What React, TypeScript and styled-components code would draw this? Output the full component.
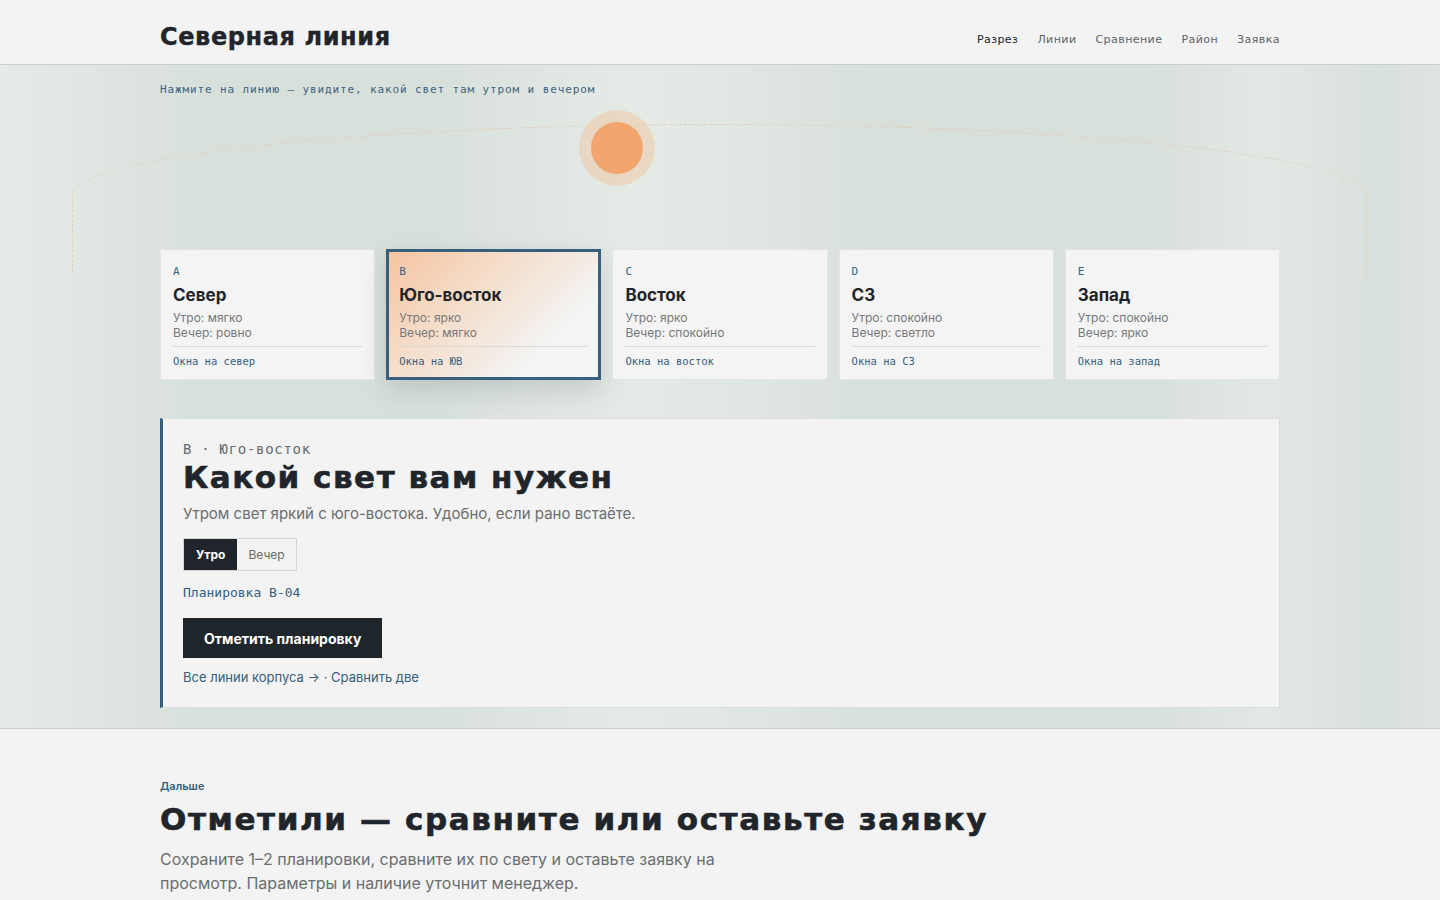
import React, { useState } from 'react';
import styled, { createGlobalStyle } from 'styled-components';

const GlobalStyle = createGlobalStyle`
  * { box-sizing: border-box; }
  body {
    margin: 0;
    background: #f2f3f2;
    font-family: Inter, "Noto Sans", sans-serif;
    color: #1f252a;
  }
`;

const DISPLAY = `"DejaVu Sans", Inter, sans-serif`;
const MONO = `"DejaVu Sans Mono", "Liberation Mono", monospace`;

const Wrap = styled.div`
  width: 1120px;
  margin: 0 auto;
`;

const Header = styled.header`
  height: 65px;
  background: #f2f3f2;
  border-bottom: 1px solid #c8cecb;
`;

const HeaderInner = styled(Wrap)`
  height: 100%;
  display: flex;
  align-items: center;
  justify-content: space-between;
`;

const Logo = styled.div`
  font-family: ${DISPLAY};
  font-weight: 700;
  font-size: 24px;
  letter-spacing: 0.6px;
  -webkit-text-stroke: 0.4px #1f252a;
  color: #1f252a;
  margin-top: 9px;
`;

const Nav = styled.nav`
  display: flex;
  gap: 19px;
  margin-top: 14px;
`;

const NavLink = styled.a<{ $active?: boolean }>`
  font-family: ${DISPLAY};
  font-size: 11px;
  letter-spacing: 0.04em;
  color: ${(p) => (p.$active ? '#1f252a' : '#5d6467')};
  text-decoration: none;
  cursor: pointer;
`;

const Hero = styled.section`
  position: relative;
  background:
    linear-gradient(90deg,
      rgba(232, 236, 233, 0.9) 0%,
      rgba(214, 222, 218, 0) 14%,
      rgba(214, 222, 218, 0) 30%,
      rgba(232, 236, 233, 0.85) 44%,
      rgba(232, 236, 233, 0.5) 52%,
      rgba(214, 222, 218, 0) 60%,
      rgba(214, 222, 218, 0) 80%,
      rgba(230, 234, 231, 0.8) 88%,
      rgba(214, 222, 218, 0) 96%,
      rgba(226, 231, 228, 0.6) 100%),
    #d8e0dc;
  border-bottom: 1px solid #c8cecb;
  padding: 18px 0 20px;
  overflow: hidden;
`;

/* dashed sky path over the building lines */
const Arc = styled.div`
  position: absolute;
  left: 72px;
  right: 73px;
  top: 59px;
  height: 151px;
  border: 1px dashed #e3cdb6;
  border-bottom: none;
  border-radius: 50% 50% 0 0 / 72px 72px 0 0;
  pointer-events: none;
`;

const Hint = styled.p`
  margin: 0;
  font-family: ${MONO};
  font-size: 11px;
  line-height: 14px;
  letter-spacing: 0.08em;
  color: #3d6580;
`;

const Sky = styled.div`
  position: relative;
  height: 152px;
`;

const Sun = styled.div`
  position: absolute;
  top: 13px;
  width: 76px;
  height: 76px;
  border-radius: 50%;
  background: rgba(240, 198, 160, 0.5);
  display: flex;
  align-items: center;
  justify-content: center;

  &::after {
    content: '';
    width: 52px;
    height: 52px;
    border-radius: 50%;
    background: #f0a66d;
  }
`;

const Lines = styled.div`
  position: relative;
  display: grid;
  grid-template-columns: repeat(5, 1fr);
  gap: 11px;
`;

const Card = styled.button<{ $active?: boolean }>`
  text-align: left;
  font: inherit;
  padding: 15px 12px 11px;
  border: 1px solid ${(p) => (p.$active ? '#36607e' : '#e2e5e3')};
  background: ${(p) =>
    p.$active
      ? 'linear-gradient(135deg, #f5c4a0 0%, #f5dcc8 35%, #f3f4f3 75%)'
      : '#f3f4f3'};
  box-shadow: ${(p) =>
    p.$active
      ? 'inset 0 0 0 2px #36607e, 0 10px 24px rgba(60, 80, 75, 0.18)'
      : 'none'};
  cursor: pointer;
  display: flex;
  flex-direction: column;
`;

const CardCode = styled.span`
  font-family: ${MONO};
  font-size: 11px;
  line-height: 14px;
  color: #36607e;
`;

const CardTitle = styled.span`
  margin-top: 5px;
  font-size: 17px;
  line-height: 22px;
  font-weight: 700;
  color: #1f252a;
`;

const CardMeta = styled.span<{ $first?: boolean }>`
  margin-top: ${(p) => (p.$first ? '4px' : '0')};
  font-size: 12px;
  line-height: 15px;
  color: #76797b;
`;

const CardFoot = styled.span`
  margin-top: 6px;
  padding-top: 7px;
  border-top: 1px solid #d8dbd9;
  font-family: ${MONO};
  font-size: 10.5px;
  line-height: 14px;
  color: #36607e;
`;

const Panel = styled.div`
  margin-top: 38px;
  background: #f2f3f2;
  border: 1px solid #d9dddb;
  border-left: 3px solid #36607e;
  padding: 21px 20px 21px;
`;

const Eyebrow = styled.div`
  font-family: ${MONO};
  font-size: 14px;
  line-height: 18px;
  letter-spacing: 0.05em;
  color: #666a6c;
`;

const PanelTitle = styled.h2`
  margin: 1px 0 0;
  font-family: ${DISPLAY};
  font-weight: 700;
  font-size: 31px;
  line-height: 36px;
  letter-spacing: 1.5px;
  -webkit-text-stroke: 0.6px #1f252a;
  color: #1f252a;
`;

const Lead = styled.p`
  margin: 8px 0 0;
  font-size: 15px;
  line-height: 22px;
  color: #6a6e70;
`;

const Toggle = styled.div`
  margin-top: 13px;
  display: flex;
  width: fit-content;
  border: 1px solid #d3d7d5;
`;

const ToggleBtn = styled.button<{ $on?: boolean }>`
  font-family: Inter, sans-serif;
  font-size: 12px;
  font-weight: ${(p) => (p.$on ? 700 : 400)};
  height: 31px;
  padding: 0 ${(p) => (p.$on ? '12px' : '11px')};
  border: none;
  background: ${(p) => (p.$on ? '#1f252a' : 'transparent')};
  color: ${(p) => (p.$on ? '#fff' : '#666a6c')};
  cursor: pointer;
`;

const LayoutCode = styled.div`
  margin-top: 13px;
  font-family: ${MONO};
  font-size: 13px;
  line-height: 18px;
  color: #36607e;
`;

const MarkButton = styled.button`
  display: block;
  margin-top: 16px;
  height: 40px;
  padding: 0 21px;
  border: none;
  background: #1f262b;
  color: #fff;
  font-family: Inter, sans-serif;
  font-size: 14px;
  font-weight: 700;
  cursor: pointer;
`;

const LinksRow = styled.div`
  margin-top: 10px;
  font-size: 13px;
  line-height: 18px;
  color: #36607e;

  a { color: inherit; text-decoration: none; }
`;

const Next = styled.section`
  padding: 50px 0 0;
`;

const Kicker = styled.div`
  font-size: 11px;
  line-height: 14px;
  font-weight: 600;
  color: #36607e;
`;

const BigTitle = styled.h2`
  margin: 4px 0 0;
  font-family: ${DISPLAY};
  font-weight: 700;
  font-size: 31px;
  line-height: 44px;
  letter-spacing: 1.6px;
  -webkit-text-stroke: 0.6px #1f252a;
  color: #1f252a;
`;

const Body = styled.p`
  margin: 6px 0 0;
  max-width: 600px;
  font-size: 16px;
  line-height: 24px;
  color: #6a6e70;
`;

type Line = { code: string; title: string; morning: string; evening: string; foot: string };

const LINES: Line[] = [
  { code: 'A', title: 'Север', morning: 'мягко', evening: 'ровно', foot: 'Окна на север' },
  { code: 'B', title: 'Юго-восток', morning: 'ярко', evening: 'мягко', foot: 'Окна на ЮВ' },
  { code: 'C', title: 'Восток', morning: 'ярко', evening: 'спокойно', foot: 'Окна на восток' },
  { code: 'D', title: 'СЗ', morning: 'спокойно', evening: 'светло', foot: 'Окна на СЗ' },
  { code: 'E', title: 'Запад', morning: 'спокойно', evening: 'ярко', foot: 'Окна на запад' },
];

const NAV = ['Разрез', 'Линии', 'Сравнение', 'Район', 'Заявка'];

export default function App() {
  const [active, setActive] = useState(1);
  const [time, setTime] = useState<'morning' | 'evening'>('morning');
  const line = LINES[active];

  return (
    <>
      <GlobalStyle />
      <Header>
        <HeaderInner>
          <Logo>Северная линия</Logo>
          <Nav>
            {NAV.map((n, i) => (
              <NavLink key={n} $active={i === 0}>{n}</NavLink>
            ))}
          </Nav>
        </HeaderInner>
      </Header>

      <Hero>
        <Arc />
        <Wrap>
          <Hint>Нажмите на линию — увидите, какой свет там утром и вечером</Hint>
          <Sky>
            <Sun style={{ left: time === 'morning' ? 419 : 700 }} />
          </Sky>
          <Lines>
            {LINES.map((l, i) => (
              <Card key={l.code} $active={i === active} onClick={() => setActive(i)}>
                <CardCode>{l.code}</CardCode>
                <CardTitle>{l.title}</CardTitle>
                <CardMeta $first>Утро: {l.morning}</CardMeta>
                <CardMeta>Вечер: {l.evening}</CardMeta>
                <CardFoot>{l.foot}</CardFoot>
              </Card>
            ))}
          </Lines>

          <Panel>
            <Eyebrow>В · {line.title}</Eyebrow>
            <PanelTitle>Какой свет вам нужен</PanelTitle>
            <Lead>Утром свет яркий с юго-востока. Удобно, если рано встаёте.</Lead>
            <Toggle>
              <ToggleBtn $on={time === 'morning'} onClick={() => setTime('morning')}>Утро</ToggleBtn>
              <ToggleBtn $on={time === 'evening'} onClick={() => setTime('evening')}>Вечер</ToggleBtn>
            </Toggle>
            <LayoutCode>Планировка В-04</LayoutCode>
            <MarkButton>Отметить планировку</MarkButton>
            <LinksRow>
              <a href="#lines">Все линии корпуса →</a> · <a href="#compare">Сравнить две</a>
            </LinksRow>
          </Panel>
        </Wrap>
      </Hero>

      <Next>
        <Wrap>
          <Kicker>Дальше</Kicker>
          <BigTitle>Отметили — сравните или оставьте заявку</BigTitle>
          <Body>
            Сохраните 1–2 планировки, сравните их по свету и оставьте заявку на
            просмотр. Параметры и наличие уточнит менеджер.
          </Body>
        </Wrap>
      </Next>
    </>
  );
}
